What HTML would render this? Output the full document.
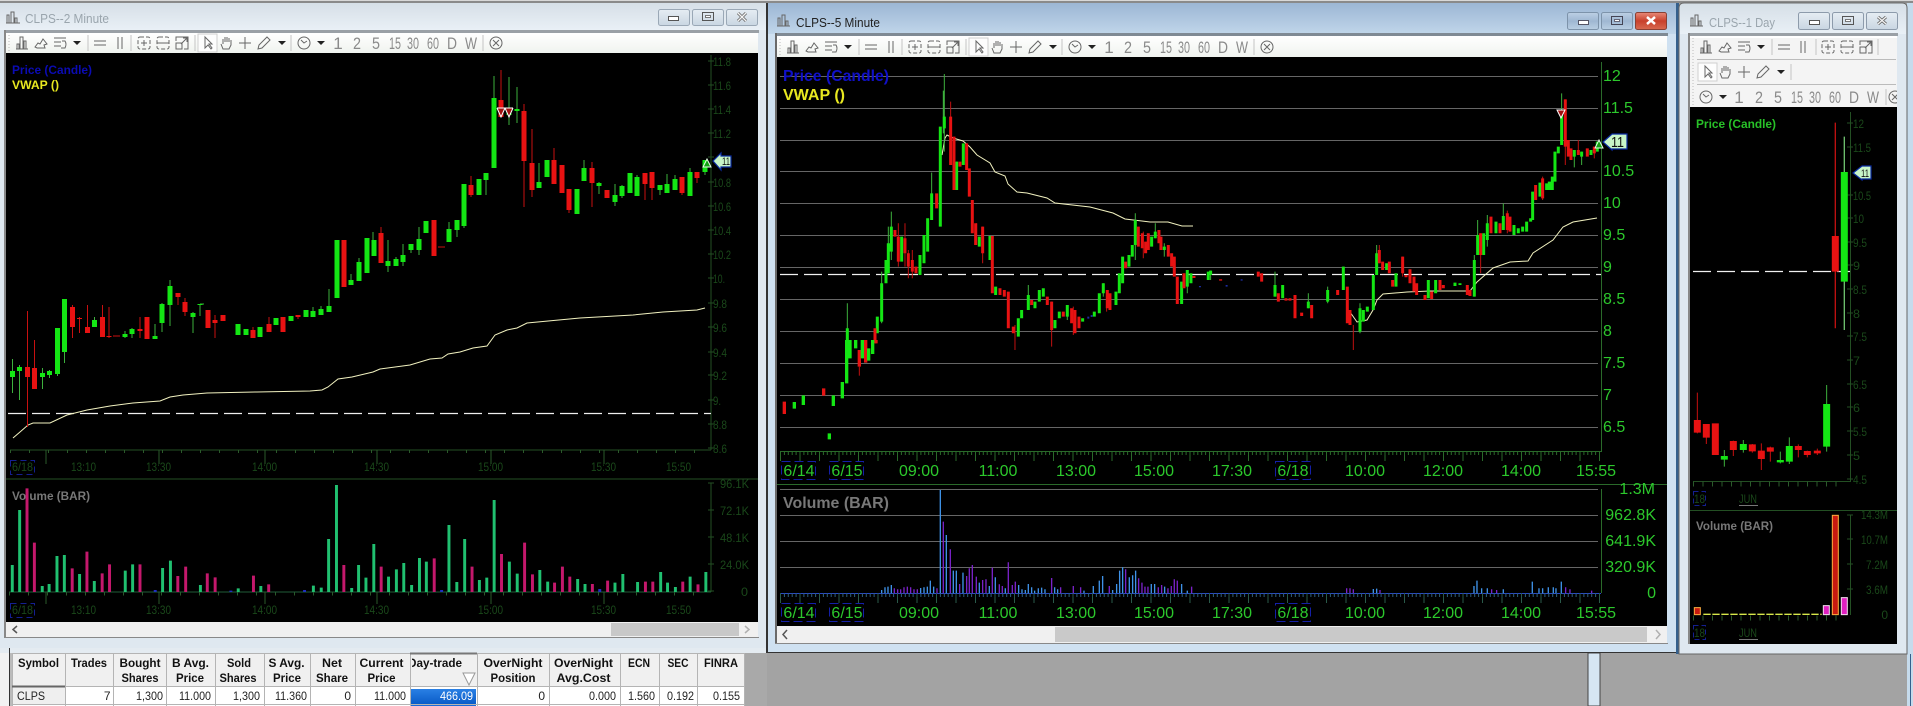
<!DOCTYPE html>
<html><head><meta charset="utf-8"><title>CLPS charts</title>
<style>
html,body{margin:0;padding:0;background:#a3a3a3;width:1913px;height:706px;overflow:hidden}
svg{display:block}
text{font-family:"Liberation Sans",Arial,sans-serif}
.a1{font-size:12px;fill:#1a481a}
.a2{font-size:16px;fill:#2cc82c}
.tb{font-size:17px;fill:#8a8a8a}
.th{font-size:12px;font-weight:bold;fill:#111;text-anchor:middle}
.td{font-size:12px;fill:#222;text-anchor:end}
.i{fill:none;stroke:#666;stroke-width:1}
</style></head><body>
<svg width="1913" height="706" viewBox="0 0 1913 706" xmlns="http://www.w3.org/2000/svg">
<defs>
<linearGradient id="tI" x1="0" y1="0" x2="0" y2="1"><stop offset="0" stop-color="#d6dfe7"/><stop offset="1" stop-color="#e9f0f6"/></linearGradient>
<linearGradient id="tA" x1="0" y1="0" x2="0" y2="1"><stop offset="0" stop-color="#9cb6d4"/><stop offset="1" stop-color="#c0d6ea"/></linearGradient>
<linearGradient id="tb" x1="0" y1="0" x2="0" y2="1"><stop offset="0" stop-color="#ffffff"/><stop offset="1" stop-color="#f0f3ef"/></linearGradient>
<linearGradient id="bI" x1="0" y1="0" x2="0" y2="1"><stop offset="0" stop-color="#e6edf3"/><stop offset="1" stop-color="#c9d6e2"/></linearGradient>
<linearGradient id="bA" x1="0" y1="0" x2="0" y2="1"><stop offset="0" stop-color="#bcd0e4"/><stop offset=".5" stop-color="#9fb7d2"/><stop offset="1" stop-color="#b9cfe3"/></linearGradient>
<linearGradient id="bC" x1="0" y1="0" x2="0" y2="1"><stop offset="0" stop-color="#e88a78"/><stop offset=".5" stop-color="#c8402c"/><stop offset="1" stop-color="#d86a50"/></linearGradient>
<linearGradient id="sel" x1="0" y1="0" x2="0" y2="1"><stop offset="0" stop-color="#2a80e4"/><stop offset="1" stop-color="#0a5cc8"/></linearGradient>
<clipPath id="dt"><rect x="412" y="655" width="51" height="16"/></clipPath>
<clipPath id="w3c"><rect x="1690" y="36" width="207" height="72"/></clipPath>

<g id="ibars"><path class="i" d="M-6 6H6M-5 6V1H-3V6M-2 6V-6H1V6M2 6V-2H4V6"/></g>
<g id="imtn"><path class="i" d="M-6 4L-3 0L-1 1L2-4L6 1L3 2L4 5H-4Z"/></g>
<g id="ilines"><path class="i" d="M-6-5H6M-6-1H1M-6 3H1M2-2H5Q7 1 5 5H1"/></g>
<path id="icaret" d="M-4-2H4L0 2Z" fill="#222"/>
<g id="ieq"><path class="i" d="M-6-2H6M-6 2H6"/></g>
<g id="ipar"><path class="i" d="M-2-6V6M2-6V6"/></g>
<g id="izin"><rect class="i" x="-6" y="-6" width="12" height="12" rx="2" stroke-dasharray="4 2"/><path class="i" d="M-3 0H3M0-3V3"/></g>
<g id="izout"><rect class="i" x="-6" y="-6" width="12" height="12" rx="2" stroke-dasharray="4 2"/><path class="i" d="M-6 0H6"/></g>
<g id="izfit"><path class="i" d="M-6-2V-6H6V6H2M-6 0H0V6H-6ZM-1 1L5-5M1-5H5V-1"/></g>
<g id="iarrow"><path class="i" d="M-3-6V5L0 2L3 6L4 5L1 1H4Z"/></g>
<g id="ihand"><path class="i" d="M-5 1L-3 6H3L5 2V-3M3-1V-5M1-1V-6M-1-1V-6M-3 1V-4"/></g>
<g id="iplus"><path class="i" d="M-6 0H6M0-6V6"/></g>
<g id="ipen"><path class="i" d="M-6 6L-5 2L3-6L6-3L-2 5Z"/></g>
<g id="iclock"><circle class="i" r="6"/><path class="i" d="M-3-3L0 0L3-2"/></g>
<g id="ixc"><circle class="i" r="6"/><path class="i" d="M-3-3L3 3M-3 3L3-3"/></g>

<g id="tool">
<use href="#ibars" x="22"/><use href="#imtn" x="41"/><use href="#ilines" x="60"/><use href="#icaret" x="77"/>
<path d="M88-8V8M131-8V8M195-8V8M291-8V8M483-8V8" stroke="#c4c4c4"/>
<use href="#ieq" x="100"/><use href="#ipar" x="120"/>
<use href="#izin" x="144"/><use href="#izout" x="163"/><use href="#izfit" x="182"/>
<rect x="198" y="-9" width="19" height="18" fill="#fdfdfd" stroke="#cfcfcf"/>
<use href="#iarrow" x="208"/><use href="#ihand" x="226"/><use href="#iplus" x="245"/><use href="#ipen" x="264"/><use href="#icaret" x="282"/>
<use href="#iclock" x="304"/><use href="#icaret" x="321"/><use href="#ixc" x="496"/>
<path d="M9-8V8" stroke="#bbb" stroke-dasharray="1 2"/>
</g>
</defs>

<!-- backdrop -->
<rect width="1913" height="706" fill="#a3a3a3"/>
<rect x="0" y="0" width="1913" height="3" fill="#8a8a8a"/>
<rect x="0" y="0" width="1913" height="1" fill="#d8d8d8"/>
<rect x="0" y="648" width="767" height="58" fill="#a9a9a9"/>
<rect x="0" y="648" width="767" height="5" fill="#e4ebf1"/>
<rect x="0" y="653" width="9" height="53" fill="#f2f2f2"/>
<rect x="9" y="648" width="1" height="58" fill="#333"/>
<rect x="10" y="653" width="2" height="53" fill="#bbb"/>
<rect x="1588" y="653" width="12" height="53" fill="#d6e6f3" stroke="#444"/>
<rect x="1907" y="3" width="6" height="703" fill="#c6dbec"/>
<rect x="1910" y="654" width="1" height="52" fill="#35608c"/>
<rect x="1676" y="3" width="3" height="651" fill="#35608c"/>

<!-- WINDOW 1 frame -->
<rect x="0" y="3" width="767" height="645" fill="#dfe8f0"/>
<rect x="0" y="3" width="767" height="27" fill="url(#tI)"/>
<rect x="766" y="3" width="2" height="650" fill="#333"/>
<rect x="4" y="30" width="755" height="3" fill="#9aa0a6"/>
<rect x="4" y="30" width="2" height="608" fill="#888"/>
<path class="i" d="M6 23H20M7 23V15H9V23M11 23V12H14V23M15 23V18H17V23" stroke="#777"/>
<text x="25" y="23" font-size="13" fill="#9aa5ad" textLength="84" lengthAdjust="spacingAndGlyphs">CLPS--2 Minute</text>
<rect x="658.500" y="9.500" width="31" height="16" rx="2" fill="url(#bI)" stroke="#9aa8b6"/>
<rect x="692.500" y="9.500" width="31" height="16" rx="2" fill="url(#bI)" stroke="#9aa8b6"/>
<rect x="726.500" y="9.500" width="31" height="16" rx="2" fill="url(#bI)" stroke="#9aa8b6"/>
<rect x="668.500" y="16.500" width="10" height="4" fill="#fff" stroke="#555"/>
<rect x="702.500" y="12.500" width="11" height="8" fill="none" stroke="#555"/><rect x="705.500" y="15.500" width="5" height="2" fill="#fff" stroke="#777"/>
<path d="M738 13L746 21M746 13L738 21" stroke="#666" stroke-width="3"/><path d="M738 13L746 21M746 13L738 21" stroke="#f4f4f4" stroke-width="1.300"/>
<rect x="6" y="33" width="752" height="20" fill="url(#tb)"/>
<g transform="translate(0,43)"><use href="#tool"/></g>
<text class="tb" x="338" y="49" text-anchor="middle">1</text><text class="tb" x="357" y="49" text-anchor="middle" textLength="8" lengthAdjust="spacingAndGlyphs">2</text><text class="tb" x="376" y="49" text-anchor="middle" textLength="8" lengthAdjust="spacingAndGlyphs">5</text><text class="tb" x="395" y="49" text-anchor="middle" textLength="12" lengthAdjust="spacingAndGlyphs">15</text><text class="tb" x="413" y="49" text-anchor="middle" textLength="12" lengthAdjust="spacingAndGlyphs">30</text><text class="tb" x="433" y="49" text-anchor="middle" textLength="12" lengthAdjust="spacingAndGlyphs">60</text><text class="tb" x="452" y="49" text-anchor="middle" textLength="10" lengthAdjust="spacingAndGlyphs">D</text><text class="tb" x="471" y="49" text-anchor="middle" textLength="12" lengthAdjust="spacingAndGlyphs">W</text>
<rect x="6" y="53" width="752" height="569" fill="#000"/>
<text x="12" y="74" font-size="12" font-weight="bold" fill="#0b0bb4" textLength="80" lengthAdjust="spacingAndGlyphs">Price (Candle)</text>
<text x="12" y="89" font-size="12" font-weight="bold" fill="#e8e820" textLength="47" lengthAdjust="spacingAndGlyphs">VWAP ()</text>
<!-- W1 axes -->
<path d="M711 55V450M10 450H711M6 479H758" stroke="#234f23" fill="none"/>
<path d="M708 61H714M708 85H714M708 109H714M708 133H714M708 157H714M708 182H714M708 206H714M708 230H714M708 254H714M708 278H714M708 303H714M708 327H714M708 352H714M708 375H714M708 400H714M708 424H714M708 448H714" stroke="#234f23"/>
<path d="M10 451.500H711" stroke="#2a5a2a" stroke-width="3" stroke-dasharray="1 18"/>
<path d="M46 450V464M159 450V464M265 450V464M377 450V464M491 450V464M604 450V464" stroke="#2a5a2a"/>
<text class="a1" x="713" y="66" textLength="18" lengthAdjust="spacingAndGlyphs">11.8</text><text class="a1" x="713" y="90" textLength="18" lengthAdjust="spacingAndGlyphs">11.6</text><text class="a1" x="713" y="114" textLength="18" lengthAdjust="spacingAndGlyphs">11.4</text><text class="a1" x="713" y="138" textLength="18" lengthAdjust="spacingAndGlyphs">11.2</text><text class="a1" x="713" y="187" textLength="18" lengthAdjust="spacingAndGlyphs">10.8</text><text class="a1" x="713" y="211" textLength="18" lengthAdjust="spacingAndGlyphs">10.6</text><text class="a1" x="713" y="235" textLength="18" lengthAdjust="spacingAndGlyphs">10.4</text><text class="a1" x="713" y="259" textLength="18" lengthAdjust="spacingAndGlyphs">10.2</text><text class="a1" x="713" y="283" textLength="12" lengthAdjust="spacingAndGlyphs">10.</text><text class="a1" x="713" y="308" textLength="14" lengthAdjust="spacingAndGlyphs">9.8</text><text class="a1" x="713" y="332" textLength="14" lengthAdjust="spacingAndGlyphs">9.6</text><text class="a1" x="713" y="357" textLength="14" lengthAdjust="spacingAndGlyphs">9.4</text><text class="a1" x="713" y="380" textLength="14" lengthAdjust="spacingAndGlyphs">9.2</text><text class="a1" x="713" y="405" textLength="8" lengthAdjust="spacingAndGlyphs">9.</text><text class="a1" x="713" y="429" textLength="14" lengthAdjust="spacingAndGlyphs">8.8</text><text class="a1" x="713" y="453" textLength="14" lengthAdjust="spacingAndGlyphs">8.6</text>
<text class="a1" x="12" y="471" textLength="21" lengthAdjust="spacingAndGlyphs">6/18</text><text class="a1" x="71" y="471" textLength="25" lengthAdjust="spacingAndGlyphs">13:10</text><text class="a1" x="146" y="471" textLength="25" lengthAdjust="spacingAndGlyphs">13:30</text><text class="a1" x="252" y="471" textLength="25" lengthAdjust="spacingAndGlyphs">14:00</text><text class="a1" x="364" y="471" textLength="25" lengthAdjust="spacingAndGlyphs">14:30</text><text class="a1" x="478" y="471" textLength="25" lengthAdjust="spacingAndGlyphs">15:00</text><text class="a1" x="591" y="471" textLength="25" lengthAdjust="spacingAndGlyphs">15:30</text><text class="a1" x="666" y="471" textLength="25" lengthAdjust="spacingAndGlyphs">15:50</text>
<text class="a1" x="12" y="614" textLength="21" lengthAdjust="spacingAndGlyphs">6/18</text><text class="a1" x="71" y="614" textLength="25" lengthAdjust="spacingAndGlyphs">13:10</text><text class="a1" x="146" y="614" textLength="25" lengthAdjust="spacingAndGlyphs">13:30</text><text class="a1" x="252" y="614" textLength="25" lengthAdjust="spacingAndGlyphs">14:00</text><text class="a1" x="364" y="614" textLength="25" lengthAdjust="spacingAndGlyphs">14:30</text><text class="a1" x="478" y="614" textLength="25" lengthAdjust="spacingAndGlyphs">15:00</text><text class="a1" x="591" y="614" textLength="25" lengthAdjust="spacingAndGlyphs">15:30</text><text class="a1" x="666" y="614" textLength="25" lengthAdjust="spacingAndGlyphs">15:50</text>
<text class="a1" x="720" y="488" textLength="29" lengthAdjust="spacingAndGlyphs">96.1K</text><text class="a1" x="720" y="515" textLength="29" lengthAdjust="spacingAndGlyphs">72.1K</text><text class="a1" x="720" y="542" textLength="29" lengthAdjust="spacingAndGlyphs">48.1K</text><text class="a1" x="720" y="569" textLength="29" lengthAdjust="spacingAndGlyphs">24.0K</text><text class="a1" x="741" y="596" textLength="7" lengthAdjust="spacingAndGlyphs">0</text>
<rect x="10.500" y="460.500" width="24" height="14" fill="none" stroke="#141f90" stroke-dasharray="6 4"/>
<rect x="10.500" y="603.500" width="24" height="14" fill="none" stroke="#141f90" stroke-dasharray="6 4"/>
<path d="M8 413.500H711" stroke="#eee" stroke-width="1.200" stroke-dasharray="18 6"/>
<path d="M13 438L20 432L28 425L33 423L50 423L67 415L87 410L110 406L133 403L160 401L170 397L183 395L207 393L257 392L310 391L322 390L328 387L338 379L352 377L373 372L380 369L410 365L430 359L442 358L448 354L460 352L473 348L487 346L495 335L507 330L517 328L527 323L580 318L633 315L663 312L697 310L705 308" fill="none" stroke="#f2f2c0" stroke-width="1"/>
<!-- W1 wicks -->
<path stroke="#3db03d" stroke-width="1" fill="none" d="M12.500 359V393M19.500 365V400M42.500 368V389M49.500 370V378M57.500 328V376M64.500 299V363M94.500 317V327M125 331V338M132 328V338M155 324V339M162 303V332M170 280V326M193 312V333M200 304V316M200 304H204M260 327V337M313 307V317M321 306V315M329 289V312M351 274V285M359 258V281M373 232V256M388 240V272M396 257V266M403 244V266M411 244V253M419 227V255M449 222V242M457 220V237M464 184V228M486 173V195M494 76V168M509 77V125M517 87V123M539 163V188M577 189V214M584 160V181M599 182V194M615 184V206M622 185V198M637 175V196M660 185V195M667 174V193M675 175V190M690 168V196M705 160V175"/>
<path stroke="#c81010" stroke-width="1" fill="none" d="M27.500 311V427M34.500 340V389M72.500 305V338M79.500 317V333M87.500 305V333M102.500 305V337M109 307V338M113 336H120M140 317V338M178 293V305M185 298V316M215 315V338M253 327V338M269 317V332M298 315V319M381 227V263M438 247H445M471 176V197M501 70V117M524 104V207M532 129V197M554 148V184M569 189V213M592 162V207M645 173V200M652 172V200M682 177V195M697 172V183"/>
<!-- W1 bodies -->
<path stroke="#14e614" stroke-width="5" fill="none" d="M12.500 371V377M19.500 367V371M42.500 373V377M49.500 371V375M57.500 328V374M64.500 299V352M94.500 320V327M125 334V337M132 329V334M155 336V339M162 304V323M170 286V305M193 313V317M200 304V305M238 324V335M246 329V335M260 327V337M276 318V325M291 316V321M306 310V317M313 311V317M321 309V315M329 306V312M337 240V298M351 280V285M359 262V281M367 238V273M374 240V256M388 261V266M396 259V266M403 255V262M411 244V250M419 239V250M426 221V233M449 229V242M457 220V230M464 184V226M479 179V195M486 173V180M494 98V168M509 109V115M517 109V111M539 182V188M547 160V177M577 189V214M584 168V181M599 183V186M615 195V202M622 186V196M630 173V193M637 177V196M660 185V190M667 184V193M675 179V190M690 172V196M705 160V172"/>
<path stroke="#e81212" stroke-width="5" fill="none" d="M27.500 367V377M34.500 368V389M72.500 307V327M79.500 318V319M87.500 327V333M102.500 317V337M109 336V337M140 329V331M147 317V339M178 293V297M185 302V312M208 310V328M215 320V323M223 315V321M253 330V338M269 324V332M283 317V332M298 315V317M344 240V287M381 233V263M434 220V256M471 185V195M501 100V117M524 111V161M532 163V190M554 160V184M562 165V193M569 189V210M592 168V183M607 190V198M645 173V184M652 172V188M682 177V193M697 172V178"/>
<!-- markers W1 -->
<path d="M497 108H513M497 108L501 117L505 108M505 108L509 117L513 108" fill="#a01010" stroke="#fff" stroke-width="1"/>
<path d="M703 167H711L707 159Z" fill="#14a014" stroke="#e8ffe8"/>
<path d="M713 161L721 153V156H731V167H721V170Z" fill="#c8f5c8" stroke="#0a2aa0" stroke-width="1.200"/>
<text x="722" y="165" font-size="11" fill="#111" textLength="8" lengthAdjust="spacingAndGlyphs">11</text>
<!-- W1 volume -->
<path d="M711 483V592M708 483H714M708 510H714M708 537H714M708 564H714M708 591H714" stroke="#234f23" fill="none"/>
<path d="M9 592H711" stroke="#1f5c38"/>
<path d="M9 594H711" stroke="#2a5a2a" stroke-width="3" stroke-dasharray="1 18"/>
<path d="M46 592V604M159 592V604M265 592V604M377 592V604M491 592V604M604 592V604" stroke="#2a5a2a"/>
<text x="12" y="500" font-size="12" font-weight="bold" fill="#787878" textLength="78" lengthAdjust="spacingAndGlyphs">Volume (BAR)</text>
<g transform="translate(0,440) scale(.4912,.3333)" fill="none" stroke-width="6">
<path stroke="#20c070" d="M25 456V375M40 456V210M86 456V438M100 456V432M116 456V348M131 456V345M162 456V402M192 456V423M255 456V392M270 456V373M331 456V384M347 456V362M408 456V435M485 456V445M531 456V438M638 456V437M654 456V443M669 456V297M685 456V135M716 456V444M730 456V375M745 456V413M761 456V312M791 456V410M807 456V388M822 456V369M838 456V435M854 456V354M868 456V365M914 456V255M930 456V426M946 456V297M976 456V420M991 456V413M1006 456V180M1037 456V365M1053 456V401M1099 456V390M1115 456V425M1176 456V417M1191 456V432M1252 456V428M1268 456V402M1298 456V426M1345 456V396M1359 456V428M1375 456V441M1405 456V410M1437 456V396"/>
<path stroke="#c4186c" d="M55 456V145M70 456V308M147 456V385M177 456V335M208 456V400M223 456V373M285 456V373M362 456V408M378 456V380M422 456V400M438 456V412M516 456V407M547 456V433M700 456V375M776 456V380M884 456V355M961 456V380M1021 456V342M1068 456V308M1084 456V403M1129 456V428M1145 456V380M1160 456V410M1206 456V432M1237 456V422M1314 456V425M1329 456V425M1390 456V425M1421 456V433"/>
<path stroke="#2030c0" d="M316 456V450M470 456V452M620 456V450M899 456V450M1221 456V447"/>
</g>
<!-- W1 scrollbar -->
<rect x="6" y="622" width="752" height="15" fill="#f0f0f0"/>
<rect x="611" y="623" width="128" height="13" fill="#c8c8c8"/>
<path d="M17 626L13 629.500L17 633" fill="none" stroke="#555" stroke-width="1.500"/>
<path d="M745 626L749 629.500L745 633" fill="none" stroke="#b0b0b0" stroke-width="1.500"/>
<rect x="4" y="637" width="755" height="1" fill="#888"/>

<!-- TABLE -->
<rect x="12" y="653" width="733" height="53" fill="#fff"/>
<rect x="12" y="653" width="733" height="33" fill="#f0f0f0"/>
<rect x="13" y="687" width="52" height="17" fill="#efefef"/>
<path d="M12 653.500H745M12 704.500H745M12.500 653V706M65.500 653V706M113.500 653V706M166.500 653V706M215.500 653V706M264.500 653V706M310.500 653V706M355.500 653V706M410.500 653V706M477.500 653V706M549.500 653V706M620.500 653V706M659.500 653V706M697.500 653V706M744.500 653V706" stroke="#b4b4b4" fill="none"/>
<path d="M12 686.500H745" stroke="#b4b4b4"/>
<path d="M12 686.500H65" stroke="#666" stroke-width="2"/>
<path d="M410 653.500H477" stroke="#777" stroke-width="2"/>
<rect x="411" y="689" width="65" height="15" fill="url(#sel)"/>
<rect x="411" y="705" width="65" height="1" fill="#1a6ad8"/>
<path d="M463 673H475L469 685Z" fill="#fff" stroke="#999"/>
<text class="th" x="38.500" y="667" textLength="41" lengthAdjust="spacingAndGlyphs">Symbol</text>
<text class="th" x="89" y="667" textLength="36" lengthAdjust="spacingAndGlyphs">Trades</text>
<text class="th" x="140" y="667" textLength="41" lengthAdjust="spacingAndGlyphs">Bought</text><text class="th" x="140" y="682" textLength="37" lengthAdjust="spacingAndGlyphs">Shares</text>
<text class="th" x="190.500" y="667" textLength="37" lengthAdjust="spacingAndGlyphs">B Avg.</text><text class="th" x="190" y="682" textLength="28" lengthAdjust="spacingAndGlyphs">Price</text>
<text class="th" x="239" y="667" textLength="24" lengthAdjust="spacingAndGlyphs">Sold</text><text class="th" x="238" y="682" textLength="37" lengthAdjust="spacingAndGlyphs">Shares</text>
<text class="th" x="286.500" y="667" textLength="36" lengthAdjust="spacingAndGlyphs">S Avg.</text><text class="th" x="287" y="682" textLength="28" lengthAdjust="spacingAndGlyphs">Price</text>
<text class="th" x="332" y="667" textLength="20" lengthAdjust="spacingAndGlyphs">Net</text><text class="th" x="332" y="682" textLength="32" lengthAdjust="spacingAndGlyphs">Share</text>
<text class="th" x="381.500" y="667" textLength="44" lengthAdjust="spacingAndGlyphs">Current</text><text class="th" x="381.500" y="682" textLength="28" lengthAdjust="spacingAndGlyphs">Price</text>
<g clip-path="url(#dt)"><text class="th" x="435" y="667" textLength="54" lengthAdjust="spacingAndGlyphs">Day-trade</text></g>
<text class="th" x="513" y="667" textLength="59" lengthAdjust="spacingAndGlyphs">OverNight</text><text class="th" x="513" y="682" textLength="45" lengthAdjust="spacingAndGlyphs">Position</text>
<text class="th" x="583.500" y="667" textLength="59" lengthAdjust="spacingAndGlyphs">OverNight</text><text class="th" x="583.500" y="682" textLength="54" lengthAdjust="spacingAndGlyphs">Avg.Cost</text>
<text class="th" x="639" y="667" textLength="22" lengthAdjust="spacingAndGlyphs">ECN</text>
<text class="th" x="678" y="667" textLength="21" lengthAdjust="spacingAndGlyphs">SEC</text>
<text class="th" x="721" y="667" textLength="34" lengthAdjust="spacingAndGlyphs">FINRA</text>
<text x="17" y="700" font-size="12" fill="#222" textLength="28" lengthAdjust="spacingAndGlyphs">CLPS</text>
<text class="td" x="110.500" y="700">7</text>
<text class="td" x="163" y="700" textLength="27" lengthAdjust="spacingAndGlyphs">1,300</text>
<text class="td" x="211" y="700" textLength="32" lengthAdjust="spacingAndGlyphs">11.000</text>
<text class="td" x="260" y="700" textLength="27" lengthAdjust="spacingAndGlyphs">1,300</text>
<text class="td" x="307" y="700" textLength="32" lengthAdjust="spacingAndGlyphs">11.360</text>
<text class="td" x="351" y="700">0</text>
<text class="td" x="406" y="700" textLength="32" lengthAdjust="spacingAndGlyphs">11.000</text>
<text class="td" x="473" y="700" textLength="33" lengthAdjust="spacingAndGlyphs" style="fill:#fff">466.09</text>
<text class="td" x="545" y="700">0</text>
<text class="td" x="616" y="700" textLength="27" lengthAdjust="spacingAndGlyphs">0.000</text>
<text class="td" x="655" y="700" textLength="27" lengthAdjust="spacingAndGlyphs">1.560</text>
<text class="td" x="694" y="700" textLength="27" lengthAdjust="spacingAndGlyphs">0.192</text>
<text class="td" x="740" y="700" textLength="27" lengthAdjust="spacingAndGlyphs">0.155</text>

<!-- WINDOW 2 frame -->
<rect x="768" y="3" width="908" height="649" fill="#cfe1f1"/>
<rect x="768" y="3" width="908" height="31" fill="url(#tA)"/>
<rect x="768" y="652" width="908" height="1" fill="#333"/>
<rect x="775" y="33" width="893" height="3" fill="#7f8a94"/>
<rect x="775" y="33" width="2" height="610" fill="#6a6a6a"/>
<path class="i" d="M777 26H790M778 26V18H780V26M782 26V15H785V26M786 26V21H788V26" stroke="#555"/>
<text x="796" y="27" font-size="13" fill="#222" textLength="84" lengthAdjust="spacingAndGlyphs">CLPS--5 Minute</text>
<rect x="1567.500" y="12.500" width="31" height="17" rx="2" fill="url(#bA)" stroke="#7d93aa"/>
<rect x="1601.500" y="12.500" width="31" height="17" rx="2" fill="url(#bA)" stroke="#7d93aa"/>
<rect x="1635.500" y="12.500" width="31" height="17" rx="2" fill="url(#bC)" stroke="#8a4034"/>
<rect x="1578.500" y="20.500" width="10" height="4" fill="#fff" stroke="#556"/>
<rect x="1611.500" y="16.500" width="11" height="8" fill="none" stroke="#445"/><rect x="1614.500" y="19.500" width="5" height="2" fill="#fff" stroke="#667"/>
<path d="M1647 17L1655 24M1655 17L1647 24" stroke="#fff" stroke-width="2.500"/>
<rect x="777" y="36" width="890" height="21" fill="url(#tb)"/>
<g transform="translate(771,47)"><use href="#tool"/></g>
<text class="tb" x="1109" y="53" text-anchor="middle">1</text><text class="tb" x="1128" y="53" text-anchor="middle" textLength="8" lengthAdjust="spacingAndGlyphs">2</text><text class="tb" x="1147" y="53" text-anchor="middle" textLength="8" lengthAdjust="spacingAndGlyphs">5</text><text class="tb" x="1166" y="53" text-anchor="middle" textLength="12" lengthAdjust="spacingAndGlyphs">15</text><text class="tb" x="1184" y="53" text-anchor="middle" textLength="12" lengthAdjust="spacingAndGlyphs">30</text><text class="tb" x="1204" y="53" text-anchor="middle" textLength="12" lengthAdjust="spacingAndGlyphs">60</text><text class="tb" x="1223" y="53" text-anchor="middle" textLength="10" lengthAdjust="spacingAndGlyphs">D</text><text class="tb" x="1242" y="53" text-anchor="middle" textLength="12" lengthAdjust="spacingAndGlyphs">W</text>
<rect x="777" y="57" width="890" height="569" fill="#000"/>
<path d="M780 76.500H1598M780 108.500H1598M780 140.500H1598M780 171.500H1598M780 203.500H1598M780 235.500H1598M780 267.500H1598M780 299.500H1598M780 331.500H1598M780 363.500H1598M780 395.500H1598M780 427.500H1598" stroke="#666"/>
<path d="M780 489.500H1598M780 515.500H1598M780 541.500H1598M780 567.500H1598" stroke="#666"/>
<text x="783" y="81" font-size="16" font-weight="bold" fill="#1010c8" textLength="106" lengthAdjust="spacingAndGlyphs">Price (Candle)</text>
<text x="783" y="100" font-size="16" font-weight="bold" fill="#e8e820" textLength="62" lengthAdjust="spacingAndGlyphs">VWAP ()</text>
<path d="M780 274.500H1601" stroke="#f0f0f0" stroke-width="1.200" stroke-dasharray="18 6"/>
<path d="M1601.500 62V451.500H780M777 484.500H1667M1601.500 489V593" stroke="#2a6a2a" fill="none"/>
<path d="M780 453H1601" stroke="#2a6a2a" stroke-width="4" stroke-dasharray="1 2.900"/>
<path d="M780 456H1601" stroke="#2a6a2a" stroke-width="10" stroke-dasharray="1 18.500"/>
<path d="M780 593.500H1601" stroke="#2848c8"/>
<path d="M780 595H1601" stroke="#2f5f7a" stroke-width="4" stroke-dasharray="1 2.900"/>
<path d="M780 598H1601" stroke="#2a5a4a" stroke-width="10" stroke-dasharray="1 18.500"/>
<!-- W2 labels -->
<text class="a2" x="1603" y="81">12</text><text class="a2" x="1603" y="113">11.5</text><text class="a2" x="1603" y="176">10.5</text><text class="a2" x="1603" y="208">10</text><text class="a2" x="1603" y="240">9.5</text><text class="a2" x="1603" y="272">9</text><text class="a2" x="1603" y="304">8.5</text><text class="a2" x="1603" y="336">8</text><text class="a2" x="1603" y="368">7.5</text><text class="a2" x="1603" y="400">7</text><text class="a2" x="1603" y="432">6.5</text>
<text class="a2" x="799" y="476" text-anchor="middle">6/14</text><text class="a2" x="847" y="476" text-anchor="middle">6/15</text><text class="a2" x="919" y="476" text-anchor="middle">09:00</text><text class="a2" x="998" y="476" text-anchor="middle">11:00</text><text class="a2" x="1076" y="476" text-anchor="middle">13:00</text><text class="a2" x="1154" y="476" text-anchor="middle">15:00</text><text class="a2" x="1232" y="476" text-anchor="middle">17:30</text><text class="a2" x="1293" y="476" text-anchor="middle">6/18</text><text class="a2" x="1365" y="476" text-anchor="middle">10:00</text><text class="a2" x="1443" y="476" text-anchor="middle">12:00</text><text class="a2" x="1521" y="476" text-anchor="middle">14:00</text><text class="a2" x="1596" y="476" text-anchor="middle">15:55</text>
<text class="a2" x="799" y="618" text-anchor="middle">6/14</text><text class="a2" x="847" y="618" text-anchor="middle">6/15</text><text class="a2" x="919" y="618" text-anchor="middle">09:00</text><text class="a2" x="998" y="618" text-anchor="middle">11:00</text><text class="a2" x="1076" y="618" text-anchor="middle">13:00</text><text class="a2" x="1154" y="618" text-anchor="middle">15:00</text><text class="a2" x="1232" y="618" text-anchor="middle">17:30</text><text class="a2" x="1293" y="618" text-anchor="middle">6/18</text><text class="a2" x="1365" y="618" text-anchor="middle">10:00</text><text class="a2" x="1443" y="618" text-anchor="middle">12:00</text><text class="a2" x="1521" y="618" text-anchor="middle">14:00</text><text class="a2" x="1596" y="618" text-anchor="middle">15:55</text>
<text class="a2" x="1655" y="494" text-anchor="end">1.3M</text><text class="a2" x="1656" y="520" text-anchor="end">962.8K</text><text class="a2" x="1656" y="546" text-anchor="end">641.9K</text><text class="a2" x="1656" y="572" text-anchor="end">320.9K</text><text class="a2" x="1656" y="598" text-anchor="end">0</text>
<g fill="none" stroke="#141fa8" stroke-dasharray="9 4">
<rect x="781.500" y="461.500" width="34" height="18"/><rect x="829.500" y="461.500" width="34" height="18"/><rect x="1275.500" y="461.500" width="35" height="18"/>
<rect x="781.500" y="603.500" width="34" height="18"/><rect x="829.500" y="603.500" width="34" height="18"/><rect x="1275.500" y="603.500" width="35" height="18"/>
</g>
<text x="783" y="508" font-size="16" font-weight="bold" fill="#787878" textLength="106" lengthAdjust="spacingAndGlyphs">Volume (BAR)</text>
<!-- W2 VWAP -->
<path d="M942 155L945 138L947 135L953 138L963 141L970 147L977 155L990 163L995 172L1005 176L1008 184L1017 192L1027 193L1047 198L1055 203L1090 207L1113 213L1125 219L1150 222L1168 222L1182 226L1193 226" fill="none" stroke="#f2f2c0"/>
<path d="M1350 312L1357 322L1367 320L1373 310L1377 300L1383 294L1407 292L1430 291L1470 291L1477 282L1493 268L1510 262L1528 261L1533 253L1553 240L1563 227L1573 222L1597 218" fill="none" stroke="#f2f2c0"/>
<!-- W2 candles left -->
<g transform="translate(760,0) scale(.3333)" fill="none">
<path stroke="#3db03d" stroke-width="3" d="M262 910V1050M394 635V780M385 680V820M365 815V970M515 518V660M553 222V455M550 272V400M805 855V930M1126 640V780M1186 670V715M1282 810V880M1213 730V770M1352 812V840M1030 850V890M922 915V960M590 485V570"/>
<path stroke="#c01010" stroke-width="3" d="M415 670V800M435 670V800M445 750V835M457 750V835M572 305V495M875 905V1040M765 975V1050M650 670V735M668 680V790M940 920V1005M1150 695V775M1040 870V935"/>
<path stroke="#14e614" stroke-width="9" d="M262 985V1050M352 950V1000M365 850V965M378 780V850M385 730V820M394 680V755M425 710V785M480 765V825M492 705V790M503 655V755M515 580V660M541 380V680M553 350V385M590 485V570M610 430V495M658 710V740M690 708V780M707 860V885M775 955V1010M785 930V955M805 885V930M825 905V925M838 870V905M850 865V890M885 960V985M898 935V955M922 915V950M968 955V965M1003 935V950M1018 880V940M1030 850V880M1068 875V915M1078 820V880M1088 770V850M1107 765V800M1117 735V770M1126 660V735M1175 710V740M1186 695V715M1213 740V750M1265 845V912M1282 810V860M1293 820V850M1345 815V840M1352 812V825"/>
<path stroke="#e81212" stroke-width="9" d="M345 985V1030M405 690V710M415 710V785M435 715V760M445 760V800M457 780V815M468 800V820M530 580V625M572 350V495M582 410V570M600 485V500M620 430V510M628 505V590M637 600V700M647 670V735M668 680V760M697 708V880M720 865V885M733 870V890M745 875V985M760 980V1000M815 900V915M862 890V915M875 905V990M910 935V950M935 925V970M945 930V1000M957 950V985M1042 870V925M1050 880V930M1097 785V805M1135 680V740M1147 700V745M1157 725V760M1165 700V750M1197 690V730M1203 710V750M1225 735V770M1235 760V800M1243 770V830M1252 830V912M1272 820V865M1302 828V834M1382 838V842M1495 815V830"/>
<path stroke="#1c2ca0" stroke-width="6" d="M985 950V956M995 945V951M1320 858V862M1400 855V860M1445 838V842"/>
</g>
<!-- W2 candles right -->
<g transform="translate(1260,0) scale(.3333)" fill="none">
<path stroke="#3db03d" stroke-width="3" d="M45 815V890M145 880V925M300 910V1000M350 735V825M653 660V765M682 645V740M730 610V690M905 280V435M943 450V502M965 455V495M203 860V910M643 765V890M250 800V870"/>
<path stroke="#c01010" stroke-width="3" d="M280 975V1050M916 298V495M955 420V465M662 700V820M742 632V700M848 530V600M358 735V790M428 770V830M1003 440V475"/>
<path stroke="#14e614" stroke-width="9" d="M45 855V890M68 855V895M145 905V925M203 870V905M250 800V870M300 925V995M310 930V965M322 920V935M340 825V930M350 760V825M380 790V810M408 820V860M505 840V895M527 840V880M585 848V858M600 850V855M643 780V890M653 705V765M671 700V765M682 670V720M708 665V700M730 648V690M762 675V705M775 685V700M788 680V695M800 665V695M812 655V665M818 575V660M840 548V590M860 550V570M868 545V570M877 530V570M885 455V545M895 440V460M905 345V435M943 450V470M965 455V470M993 450V465M1012 425V455"/>
<path stroke="#e81212" stroke-width="9" d="M5 820V845M55 880V905M78 895V902M90 895V902M105 885V955M125 938V948M155 915V955M233 870V885M262 860V970M270 930V975M358 750V790M368 785V810M388 785V820M398 840V860M428 770V820M438 825V832M450 808V850M462 830V875M470 850V885M495 885V900M515 875V897M540 840V870M550 855V865M622 855V885M630 870V888M662 700V765M693 650V700M720 670V700M742 640V690M750 650V695M827 555V600M848 535V595M916 298V440M925 420V470M933 445V480M955 450V465M982 445V470M1003 440V460"/>
</g>
<g transform="translate(770,340) scale(.3333)" fill="none">
<path stroke="#e81212" stroke-width="10" d="M43 185V222M161 145V167M268 30V80M287 0V68M318 0V10"/>
<path stroke="#14e614" stroke-width="10" d="M73 186V206M100 166V195M190 166V198M178 280V298M217 126V175M230 0V130M240 0V55M277 0V55M296 25V62M308 0V42M257 0V25"/>
<path stroke="#c01010" stroke-width="3" d="M268 80V107"/>
<!-- W2 volume -->
<g stroke-width="4">
<path stroke="#3f92e8" d="M335 760V750M345 760V742M354 760V740M364 760V735M452 760V744M462 760V742M472 760V740M481 760V722M491 760V740M511 760V450M529 760V585M550 760V692M559 760V692M579 760V698M628 760V728M658 760V738M676 760V712M706 760V745M746 760V735M756 760V748M766 760V750M775 760V732M785 760V742M794 760V752M805 760V745M815 760V743M825 760V748M854 760V742M863 760V748M942 760V752M970 760V738M988 760V722M998 760V708M1028 760V750M1040 760V732M1049 760V692M1058 760V682M1078 760V712M1088 760V706M1097 760V692M1144 760V732M1154 760V732M1184 760V740M1235 760V732M1252 760V752"/>
<path stroke="#7a22c8" d="M373 760V745M383 760V748M392 760V748M402 760V742M412 760V740M422 760V742M432 760V748M442 760V748M501 760V745M520 760V545M541 760V628M569 760V732M590 760V708M598 760V685M607 760V675M619 760V710M638 760V720M648 760V718M667 760V683M688 760V733M697 760V738M715 760V667M727 760V735M736 760V725M845 760V714M872 760V742M910 760V738M932 760V742M1018 760V738M1067 760V688M1106 760V715M1116 760V728M1125 760V740M1134 760V740M1165 760V742M1175 760V735M1194 760V745M1204 760V738M1213 760V718M1222 760V722M1265 760V740"/>
</g>
</g>
<g transform="translate(1220,340) scale(.3333)" fill="none" stroke-width="4">
<path stroke="#3f92e8" d="M460 760V747M470 760V746M762 760V738M771 760V722M785 760V745M802 760V745M850 760V748M937 760V725M957 760V745M968 760V745M985 760V742M1000 760V742M1008 760V745M1024 760V725"/>
<path stroke="#7a22c8" d="M380 760V745M390 760V745M400 760V748M480 760V750M815 760V748M830 760V750M1037 760V742M1050 760V748M1115 760V752"/>
</g>
<!-- W2 markers -->
<path d="M1557 110H1565L1561 118Z" fill="#a01010" stroke="#fff"/>
<path d="M1595 148H1603L1599 140Z" fill="#14a014" stroke="#e8ffe8"/>
<path d="M1603 142L1612 134H1627V149H1612V150Z" fill="#c8f5c8" stroke="#0a2aa0" stroke-width="1.200"/>
<text x="1611" y="147" font-size="15" fill="#111" textLength="13" lengthAdjust="spacingAndGlyphs">11</text>
<!-- W2 scrollbar -->
<rect x="777" y="626" width="890" height="17" fill="#f0f0f0"/>
<rect x="1055" y="627" width="592" height="15" fill="#c9c9c9"/>
<path d="M787 630L783 634.500L787 639" fill="none" stroke="#555" stroke-width="1.500"/>
<path d="M1656 630L1660 634.500L1656 639" fill="none" stroke="#b0b0b0" stroke-width="1.500"/>
<rect x="775" y="643" width="893" height="1" fill="#888"/>

<!-- WINDOW 3 frame -->
<path d="M1679 654V8Q1679 3 1684 3H1902Q1907 3 1907 8V654Z" fill="#dfe8f0" stroke="#666"/>
<path d="M1680 34V8Q1680 4 1684 4H1902Q1906 4 1906 8V34Z" fill="url(#tI)"/>
<rect x="1688" y="33" width="210" height="3" fill="#9aa0a6"/>
<rect x="1688" y="33" width="2" height="611" fill="#888"/>
<path class="i" d="M1690 26H1703M1691 26V18H1693V26M1695 26V15H1698V26M1699 26V21H1701V26" stroke="#666"/>
<text x="1709" y="27" font-size="13" fill="#9aa5ad" textLength="66" lengthAdjust="spacingAndGlyphs">CLPS--1 Day</text>
<rect x="1798.500" y="12.500" width="31" height="17" rx="2" fill="url(#bI)" stroke="#8d9bab"/>
<rect x="1832.500" y="12.500" width="31" height="17" rx="2" fill="url(#bI)" stroke="#8d9bab"/>
<rect x="1866.500" y="12.500" width="31" height="17" rx="2" fill="url(#bI)" stroke="#8d9bab"/>
<rect x="1809.500" y="20.500" width="10" height="4" fill="#fff" stroke="#555"/>
<rect x="1842.500" y="16.500" width="11" height="8" fill="none" stroke="#555"/><rect x="1845.500" y="19.500" width="5" height="2" fill="#fff" stroke="#777"/>
<path d="M1878 17L1886 24M1886 17L1878 24" stroke="#666" stroke-width="3"/><path d="M1878 17L1886 24M1886 17L1878 24" stroke="#f4f4f4" stroke-width="1.300"/>
<rect x="1690" y="36" width="207" height="71" fill="#f4f4f4"/>
<rect x="1690" y="36" width="207" height="2" fill="#fff"/>
<path d="M1697 59.500H1896M1697 84.500H1896" stroke="#bbb"/>
<path d="M1693 38V105" stroke="#bbb" stroke-dasharray="1 2"/>
<g clip-path="url(#w3c)">
<use href="#ibars" x="1706" y="47"/><use href="#imtn" x="1725" y="47"/><use href="#ilines" x="1744" y="47"/><use href="#icaret" x="1761" y="47"/>
<path d="M1772 39V55M1816 39V55M1878 39V55M1791 64V80M1886 89V105" stroke="#c4c4c4"/>
<use href="#ieq" x="1784" y="47"/><use href="#ipar" x="1803" y="47"/>
<use href="#izin" x="1828" y="47"/><use href="#izout" x="1847" y="47"/><use href="#izfit" x="1866" y="47"/>
<rect x="1698" y="63" width="19" height="18" fill="#fdfdfd" stroke="#cfcfcf"/>
<use href="#iarrow" x="1708" y="72"/><use href="#ihand" x="1725" y="72"/><use href="#iplus" x="1744" y="72"/><use href="#ipen" x="1763" y="72"/><use href="#icaret" x="1781" y="72"/>
<use href="#iclock" x="1706" y="97"/><use href="#icaret" x="1723" y="97"/><use href="#ixc" x="1895" y="97"/>
<text class="tb" x="1739" y="103" text-anchor="middle">1</text><text class="tb" x="1759" y="103" text-anchor="middle" textLength="8" lengthAdjust="spacingAndGlyphs">2</text><text class="tb" x="1778" y="103" text-anchor="middle" textLength="8" lengthAdjust="spacingAndGlyphs">5</text><text class="tb" x="1797" y="103" text-anchor="middle" textLength="12" lengthAdjust="spacingAndGlyphs">15</text><text class="tb" x="1815" y="103" text-anchor="middle" textLength="12" lengthAdjust="spacingAndGlyphs">30</text><text class="tb" x="1835" y="103" text-anchor="middle" textLength="12" lengthAdjust="spacingAndGlyphs">60</text><text class="tb" x="1854" y="103" text-anchor="middle" textLength="10" lengthAdjust="spacingAndGlyphs">D</text><text class="tb" x="1873" y="103" text-anchor="middle" textLength="12" lengthAdjust="spacingAndGlyphs">W</text>
</g>
<rect x="1690" y="107" width="207" height="537" fill="#000"/>
<text x="1696" y="128" font-size="12" font-weight="bold" fill="#28c028" textLength="80" lengthAdjust="spacingAndGlyphs">Price (Candle)</text>
<text x="1696" y="530" font-size="12" font-weight="bold" fill="#787878" textLength="77" lengthAdjust="spacingAndGlyphs">Volume (BAR)</text>
<path d="M1850.500 112V481.500H1693M1690 510.500H1897M1850.500 515V615" stroke="#234f23" fill="none"/>
<path d="M1693 484H1845" stroke="#2a5a2a" stroke-width="5" stroke-dasharray="1 8.500"/>
<path d="M1693 618H1845" stroke="#2a5a2a" stroke-width="5" stroke-dasharray="1 8.500"/>
<path d="M1847 123H1853M1847 147H1853M1847 195H1853M1847 218H1853M1847 242H1853M1847 265H1853M1847 289H1853M1847 313H1853M1847 336H1853M1847 360H1853M1847 384H1853M1847 407H1853M1847 431H1853M1847 455H1853M1847 479H1853M1847 515H1853M1847 539H1853M1847 564H1853M1847 589H1853" stroke="#234f23"/>
<text class="a1" x="1853" y="128" textLength="11" lengthAdjust="spacingAndGlyphs">12</text><text class="a1" x="1853" y="152" textLength="18" lengthAdjust="spacingAndGlyphs">11.5</text><text class="a1" x="1853" y="200" textLength="18" lengthAdjust="spacingAndGlyphs">10.5</text><text class="a1" x="1853" y="223" textLength="11" lengthAdjust="spacingAndGlyphs">10</text><text class="a1" x="1853" y="247" textLength="14" lengthAdjust="spacingAndGlyphs">9.5</text><text class="a1" x="1853" y="270" textLength="7" lengthAdjust="spacingAndGlyphs">9</text><text class="a1" x="1853" y="294" textLength="14" lengthAdjust="spacingAndGlyphs">8.5</text><text class="a1" x="1853" y="318" textLength="7" lengthAdjust="spacingAndGlyphs">8</text><text class="a1" x="1853" y="341" textLength="14" lengthAdjust="spacingAndGlyphs">7.5</text><text class="a1" x="1853" y="365" textLength="7" lengthAdjust="spacingAndGlyphs">7</text><text class="a1" x="1853" y="389" textLength="14" lengthAdjust="spacingAndGlyphs">6.5</text><text class="a1" x="1853" y="412" textLength="7" lengthAdjust="spacingAndGlyphs">6</text><text class="a1" x="1853" y="436" textLength="14" lengthAdjust="spacingAndGlyphs">5.5</text><text class="a1" x="1853" y="460" textLength="7" lengthAdjust="spacingAndGlyphs">5</text><text class="a1" x="1853" y="484" textLength="14" lengthAdjust="spacingAndGlyphs">4.5</text>
<text class="a1" x="1888" y="519" text-anchor="end" textLength="27" lengthAdjust="spacingAndGlyphs">14.3M</text><text class="a1" x="1888" y="544" text-anchor="end" textLength="27" lengthAdjust="spacingAndGlyphs">10.7M</text><text class="a1" x="1888" y="569" text-anchor="end" textLength="22" lengthAdjust="spacingAndGlyphs">7.2M</text><text class="a1" x="1888" y="594" text-anchor="end" textLength="22" lengthAdjust="spacingAndGlyphs">3.6M</text><text class="a1" x="1888" y="619" text-anchor="end">0</text>
<text class="a1" x="1694" y="503" textLength="11" lengthAdjust="spacingAndGlyphs">18</text><text class="a1" x="1739" y="503" textLength="18" lengthAdjust="spacingAndGlyphs">JUN</text>
<text class="a1" x="1694" y="637" textLength="11" lengthAdjust="spacingAndGlyphs">18</text><text class="a1" x="1739" y="637" textLength="18" lengthAdjust="spacingAndGlyphs">JUN</text>
<path d="M1739 505.500H1758M1739 639.500H1758" stroke="#777"/>
<rect x="1693.500" y="491.500" width="12" height="14" fill="none" stroke="#141f90" stroke-dasharray="5 3"/>
<rect x="1693.500" y="625.500" width="12" height="14" fill="none" stroke="#141f90" stroke-dasharray="5 3"/>
<path d="M1693 271.500H1850" stroke="#f0f0f0" stroke-width="1.200" stroke-dasharray="18 6"/>
<!-- W3 candles -->
<g transform="translate(1660,0) scale(.3333)" fill="none">
<path stroke="#c01010" stroke-width="4" d="M526 368V985"/>
<path stroke="#6fc06f" stroke-width="4" d="M553 410V990"/>
<path stroke="#e81212" stroke-width="21" d="M526 708V815"/>
<path stroke="#14e614" stroke-width="21" d="M553 516V845"/>
</g>
<g transform="translate(1660,350) scale(.3333)" fill="none">
<path stroke="#c81010" stroke-width="3" d="M112 128V250M139 222V282M220 272V318M277 282V308M304 280V360M331 290V335M415 283V322M442 302V322M472 296V315"/>
<path stroke="#3db03d" stroke-width="3" d="M193 300V350M250 270V308M361 305V340M388 262V342M500 105V305"/>
<path stroke="#e81212" stroke-width="21" d="M112 210V248M139 222V263M166 220V315M220 273V300M277 283V304M304 302V327M331 292V305M415 288V300M442 303V315M472 302V310"/>
<path stroke="#14e614" stroke-width="21" d="M193 318V329M250 282V300M361 330V337M388 288V335M500 162V290"/>
<path stroke="#d8e84a" stroke-width="4" stroke-dasharray="22 5" d="M130 793H485"/>
<rect x="103" y="773" width="18" height="21" fill="#c81a10" stroke="#ffb040" stroke-width="3"/>
<rect x="490" y="767" width="18" height="27" fill="#e020c0" stroke="#f4e0f0" stroke-width="3"/>
<rect x="517" y="496" width="18" height="298" fill="#c81a10" stroke="#ffb040" stroke-width="3"/>
<rect x="544" y="743" width="18" height="51" fill="#e020c0" stroke="#f4e0f0" stroke-width="3"/>
</g>
<path d="M1853 173L1862 166H1871V179H1862V180Z" fill="#c8f5c8" stroke="#0a2aa0" stroke-width="1.200"/>
<text x="1861" y="177" font-size="11" fill="#111" textLength="8" lengthAdjust="spacingAndGlyphs">11</text>
</svg>
</body></html>
